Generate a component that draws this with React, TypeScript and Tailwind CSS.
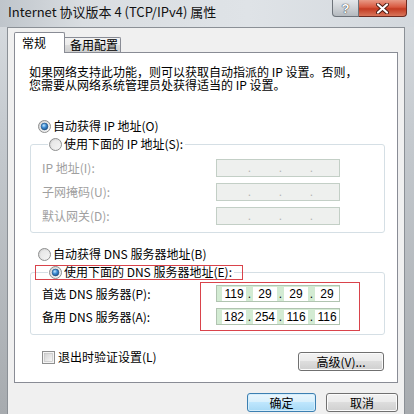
import React from "react"

const cjk = "font-['Noto_Sans_CJK_SC',sans-serif]"

function Radio({ checked }: { checked?: boolean }) {
  return (
    <svg width="13" height="13" viewBox="0 0 13 13" className="shrink-0">
      <defs>
        <linearGradient id="radioFace" x1="0" y1="0" x2="1" y2="1">
          <stop offset="0" stopColor="#cfcfcf" />
          <stop offset="1" stopColor="#fbfbfb" />
        </linearGradient>
        <radialGradient id="radioDot" cx="0.4" cy="0.35" r="0.75">
          <stop offset="0" stopColor="#c4e8ff" />
          <stop offset="0.45" stopColor="#3b8ad2" />
          <stop offset="1" stopColor="#184a80" />
        </radialGradient>
      </defs>
      <circle cx="6.5" cy="6.5" r="6" fill="url(#radioFace)" stroke="#8e8f8f" />
      <circle cx="6.5" cy="6.5" r="4.3" fill="#f3f3f3" opacity="0.55" />
      {checked && <circle cx="6.5" cy="6.5" r="3.4" fill="url(#radioDot)" stroke="#1d4d7e" strokeWidth="0.6" />}
    </svg>
  )
}

function Checkbox() {
  return (
    <svg width="13" height="13" viewBox="0 0 13 13" className="shrink-0">
      <defs>
        <linearGradient id="checkFace" x1="0" y1="0" x2="1" y2="1">
          <stop offset="0" stopColor="#d2d2d2" />
          <stop offset="1" stopColor="#f8f8f8" />
        </linearGradient>
      </defs>
      <rect x="0.5" y="0.5" width="12" height="12" fill="#f4f4f4" stroke="#8e8f8f" />
      <rect x="2.5" y="2.5" width="8" height="8" fill="url(#checkFace)" stroke="#bdbdbd" strokeWidth="0.6" />
    </svg>
  )
}

function Option({ label, checked }: { label: string; checked?: boolean }) {
  return (
    <div className="flex h-[18px] items-center gap-[2px]">
      <Radio checked={checked} />
      <span className="leading-[18px]">{label}</span>
    </div>
  )
}

function IpField({ octets, disabled }: { octets?: string[]; disabled?: boolean }) {
  const values = octets ?? ["", "", "", ""]
  return (
    <div
      className={`flex h-full w-[124px] items-center border pl-[5px] font-['Liberation_Sans',sans-serif] text-[12px] ${
        disabled ? "border-[#c3cfc6] bg-[#eef0ee] text-[#b4b4b4]" : "border-[#b1c4b1] bg-[#d3ebd3] text-black"
      }`}
    >
      {values.map((v, i) => (
        <React.Fragment key={i}>
          <span className={`flex h-[14px] w-[24px] items-center justify-center ${disabled ? "" : "bg-white"}`}>{v}</span>
          {i < 3 && <span className="w-[7px] text-center leading-[14px]">.</span>}
        </React.Fragment>
      ))}
    </div>
  )
}

function WinButton({ label, primary, className }: { label: string; primary?: boolean; className?: string }) {
  return (
    <button
      className={`flex h-[19px] items-center justify-center rounded-[3px] border text-[12px] leading-none text-black ${
        primary
          ? "border-[#3c7fb1] bg-[linear-gradient(180deg,#eaf6fd_0%,#d9f0fc_45%,#bee6fd_50%,#a7d9f5_100%)] shadow-[inset_0_0_0_1px_#d5eefc]"
          : "border-[#707070] bg-[linear-gradient(180deg,#f2f2f2_0%,#ebebeb_45%,#dddddd_50%,#cfcfcf_100%)] shadow-[inset_0_0_0_1px_#fbfbfb]"
      } ${className ?? ""}`}
    >
      {label}
    </button>
  )
}

export default function App() {
  return (
    <div
      className={`flex h-[414px] w-[414px] flex-col overflow-hidden bg-[linear-gradient(180deg,#d9dde1_0%,#c6cbd0_30%,#a7abaf_100%)] text-[12px] text-black ${cjk}`}
    >
      {/* Title bar */}
      <div className="flex h-[27px] shrink-0 items-start bg-[linear-gradient(90deg,#bfc5cb_0%,#d9dde1_20%,#dfe3e7_60%,#d3d8dd_100%)]">
        <div className="pl-[8px] pt-[4px] text-[13px] leading-[16px] text-[#111]">Internet 协议版本 4 (TCP/IPv4) 属性</div>
        <div className="ml-auto mr-[7px] flex h-[17px]">
          <div className="flex w-[27px] items-center justify-center rounded-bl-[4px] border border-t-0 border-[#6d737a] bg-[linear-gradient(180deg,#e4e7ea_0%,#cdd1d5_50%,#b4b9be_100%)] font-['Liberation_Sans',sans-serif] text-[13px] font-bold leading-none text-white [text-shadow:0_0_1px_#333,0_0_1px_#333]">
            ?
          </div>
          <div className="flex w-[48px] items-center justify-center rounded-br-[4px] border border-l-0 border-t-0 border-[#6d2a20] bg-[linear-gradient(180deg,#e89a86_0%,#d8583f_45%,#c33b22_55%,#d8755a_100%)]">
            <svg width="13" height="11" viewBox="0 0 13 11">
              <path d="M2 1.5 L11 9.5 M11 1.5 L2 9.5" stroke="#4a1a12" strokeWidth="4" strokeLinecap="round" />
              <path d="M2 1.5 L11 9.5 M11 1.5 L2 9.5" stroke="#ffffff" strokeWidth="2.2" strokeLinecap="round" />
            </svg>
          </div>
        </div>
      </div>

      {/* Body */}
      <div className="ml-[7px] mr-[9px] flex flex-1 flex-col border border-b-0 border-[#8b9096] bg-[#f0f0f0] pl-[6px] pr-[6px] pt-[4px]">
        {/* Tabs */}
        <div className="relative z-10 -mb-px flex items-end">
          <div className="h-[21px] w-[51px] rounded-t-[2px] border border-b-0 border-[#898c95] bg-white pl-[7px] pt-[2px] leading-[16px]">
            常规
          </div>
          <div className="mb-px h-[15px] w-[56px] rounded-tr-[2px] border border-b-0 border-l-0 border-[#898c95] bg-[linear-gradient(180deg,#f2f2f2_0%,#ebebeb_50%,#dcdcdc_51%,#cfcfcf_100%)] pl-[5px] leading-[14px]">
            备用配置
          </div>
        </div>

        {/* Panel */}
        <div className="flex h-[331px] w-[384px] flex-col border border-[#898c95] bg-white pl-[14px] pr-[12px] pt-[12px]">
          <p className="leading-[13px]">
            如果网络支持此功能，则可以获取自动指派的 IP 设置。否则，
            <br />
            您需要从网络系统管理员处获得适当的 IP 设置。
          </p>

          <div className="ml-[9px] mt-[26px]">
            <Option label="自动获得 IP 地址(O)" checked />
          </div>

          <fieldset className="ml-[1px] rounded-[3px] border border-[#d5dfe5] pb-[7px] pl-[11px]">
            <legend className="ml-[6px] pl-[1px] pr-[2px]">
              <Option label="使用下面的 IP 地址(S):" />
            </legend>
            <div className="mt-[6px] grid grid-cols-[174px_124px] gap-y-[6px] text-[#a0a0a0]">
              {["IP 地址(I):", "子网掩码(U):", "默认网关(D):"].map((l) => (
                <React.Fragment key={l}>
                  <div className="flex h-[18px] items-center">{l}</div>
                  <div className="h-[18px]">
                    <IpField disabled />
                  </div>
                </React.Fragment>
              ))}
            </div>
          </fieldset>

          <div className="ml-[9px] mt-[12px]">
            <Option label="自动获得 DNS 服务器地址(B)" />
          </div>

          <fieldset className="ml-[1px] rounded-[3px] border border-[#d5dfe5] pb-[9px] pl-[11px]">
            <legend className="relative ml-[6px] pl-[1px] pr-[2px]">
              <Option label="使用下面的 DNS 服务器地址(E):" checked />
              <span className="pointer-events-none absolute left-[-13px] top-[2px] h-[15px] w-[208px] border border-[#d9434b]" />
            </legend>
            <div className="relative mt-[4px] grid grid-cols-[174px_124px] gap-y-[6px]">
              <div className="flex h-[17px] items-center">首选 DNS 服务器(P):</div>
              <div className="h-[17px]">
                <IpField octets={["119", "29", "29", "29"]} />
              </div>
              <div className="flex h-[17px] items-center">备用 DNS 服务器(A):</div>
              <div className="h-[17px]">
                <IpField octets={["182", "254", "116", "116"]} />
              </div>
              <span className="pointer-events-none absolute left-[158px] top-[-3px] h-[49px] w-[160px] border border-[#d9434b]" />
            </div>
          </fieldset>

          <div className="mt-[13px] flex items-start">
            <div className="ml-[13px] flex h-[18px] items-center gap-[3px]">
              <Checkbox />
              <span>退出时验证设置(L)</span>
            </div>
            <WinButton label="高级(V)..." className="ml-auto mr-[1px] mt-[4px] w-[86px]" />
          </div>
        </div>

        {/* Dialog buttons */}
        <div className="mt-[10px] flex justify-end gap-[10px]">
          <WinButton label="确定" primary className="w-[69px]" />
          <WinButton label="取消" className="w-[72px]" />
        </div>
      </div>
    </div>
  )
}
